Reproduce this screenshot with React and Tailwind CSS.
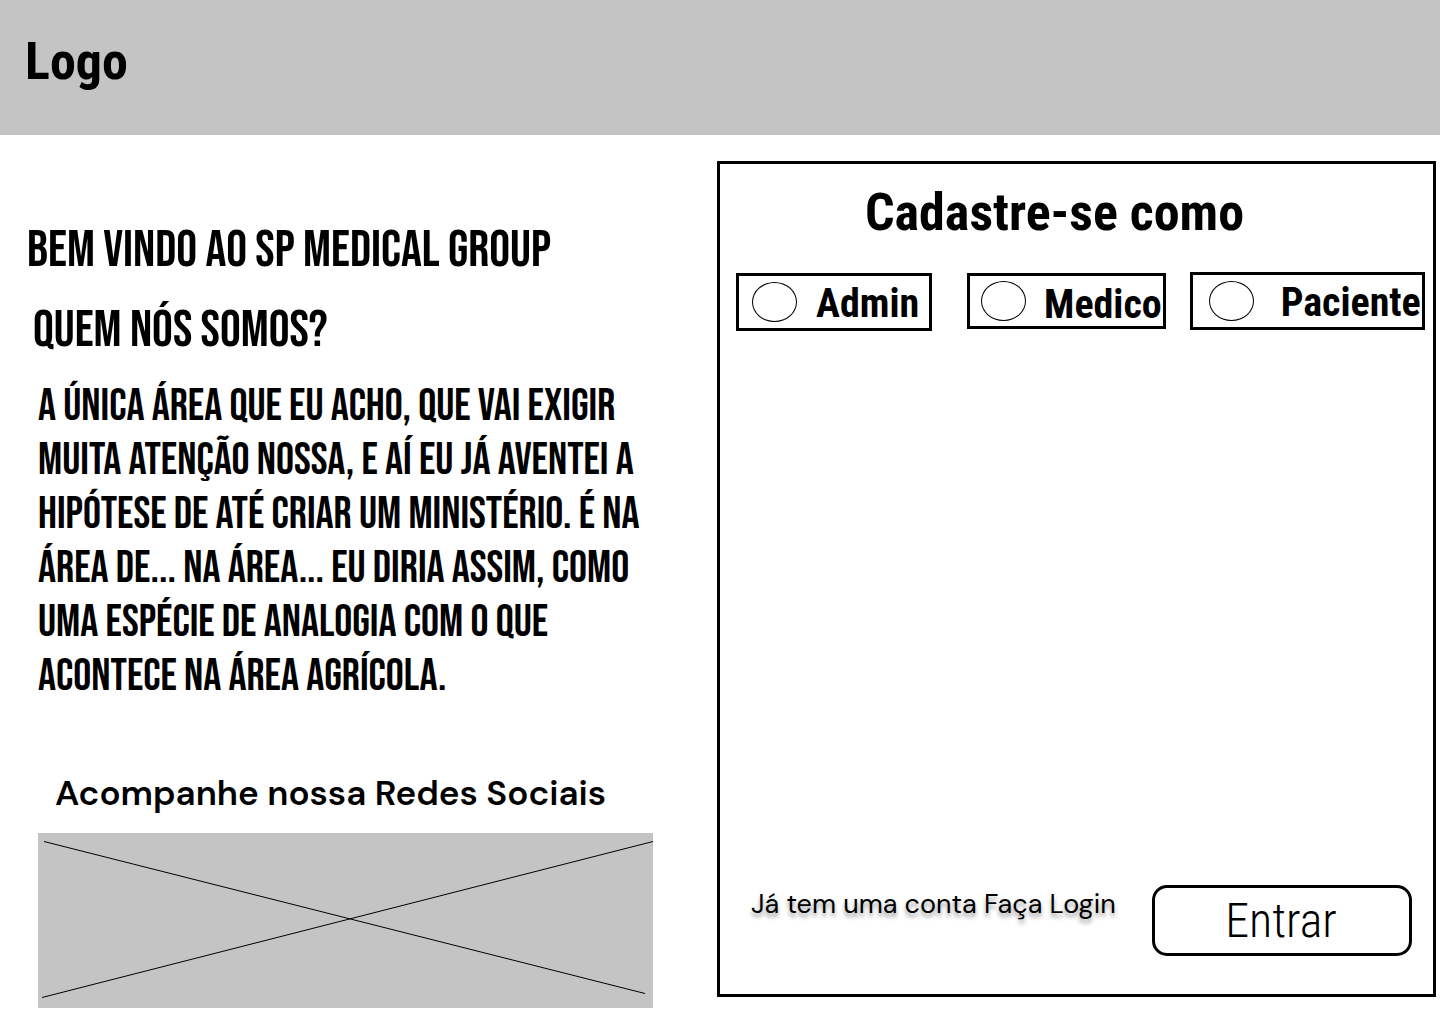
const roles = [
  { id: "admin", label: "Admin", box: "mt-px h-[58px] grow-[195] pl-[13px]", text: "pl-[19px] pt-[3px]" },
  { id: "medico", label: "Medico", box: "mt-px ml-[35px] h-14 grow-[200] pl-[11px]", text: "pl-[18px] pt-2" },
  { id: "paciente", label: "Paciente", box: "ml-6 h-[58px] grow-[235] pl-4", text: "pl-[27px] pt-[3px]" },
];

function RoleOption({ role }) {
  return (
    <div className={"flex basis-0 items-center border-[3px] border-black " + role.box}>
      <input
        type="radio"
        name="role"
        id={role.id}
        className="h-10 w-[45px] shrink-0 appearance-none rounded-[50%] border border-black checked:bg-black"
      />
      <label htmlFor={role.id} className={"text-[40px] leading-[48px] font-bold whitespace-nowrap " + role.text}>
        {role.label}
      </label>
    </div>
  );
}

export default function App() {
  return (
    <div className="bg-white text-black font-['Roboto_Condensed',Roboto,sans-serif]">
      <header className="bg-[#c4c4c4] px-[25px] pt-8 pb-[43px]">
        <a href="#" className="block w-fit text-[52px] leading-[60px] font-bold">Logo</a>
      </header>

      <main className="grid grid-cols-[717fr_719fr] pr-1">
        <section className="pt-[85px] pr-16 pb-4">
          <div className="font-['Bebas_Neue','Roboto_Condensed',sans-serif]">
            <h1 className="pl-[27px] text-[52px] leading-[62px]">BEM VINDO AO SP MEDICAL GROUP</h1>
            <h2 className="mt-[18px] pl-[33px] text-[52px] leading-[62px]">QUEM NÓS SOMOS?</h2>
            <p className="mt-[18px] pl-[38px] text-[45px] leading-[54px]">
              A ÚNICA ÁREA QUE EU ACHO, QUE VAI EXIGIR MUITA ATENÇÃO NOSSA, E AÍ EU JÁ AVENTEI A HIPÓTESE DE ATÉ CRIAR UM MINISTÉRIO. É NA ÁREA DE... NA ÁREA... EU DIRIA ASSIM, COMO UMA ESPÉCIE DE ANALOGIA COM O QUE ACONTECE NA ÁREA AGRÍCOLA.
            </p>
          </div>
          <h2 className="mt-[65px] pl-[55px] text-[35px] leading-[48px] font-semibold whitespace-nowrap font-['DM_Sans',Inter,sans-serif]">
            Acompanhe nossa Redes Sociais
          </h2>
          <svg
            viewBox="0 0 615 175"
            preserveAspectRatio="none"
            className="mt-4 ml-[38px] block h-[175px] w-[calc(100%-38px)] bg-[#c4c4c4]"
            role="img"
            aria-label="Redes sociais"
          >
            <path d="M6 8.5 607 160.500M4 164.500 615 8.500" stroke="black" fill="none" />
          </svg>
        </section>

        <form className="mt-[26px] mb-[27px] flex flex-col border-[3px] border-black pt-[19px]" onSubmit={(e) => e.preventDefault()}>
          <h2 className="pr-11 text-center text-[52px] leading-[60px] font-bold">Cadastre-se como</h2>
          <div className="mt-[29px] flex items-start pr-2 pl-4">
            {roles.map((role) => (
              <RoleOption key={role.id} role={role} />
            ))}
          </div>
          <div className="mt-auto flex items-start justify-between pr-[21px] pb-[38px] pl-[31px]">
            <a href="#" className="pt-px text-[27px] leading-9 whitespace-nowrap font-['DM_Sans',Inter,sans-serif] [text-shadow:0_4px_4px_rgba(0,0,0,0.4)]">
              Já tem uma conta Faça Login
            </a>
            <button type="submit" className="h-[71px] w-[260px] rounded-[15px] border-[3px] border-black pr-0.5 text-5xl leading-[56px] font-light">
              Entrar
            </button>
          </div>
        </form>
      </main>
    </div>
  );
}
